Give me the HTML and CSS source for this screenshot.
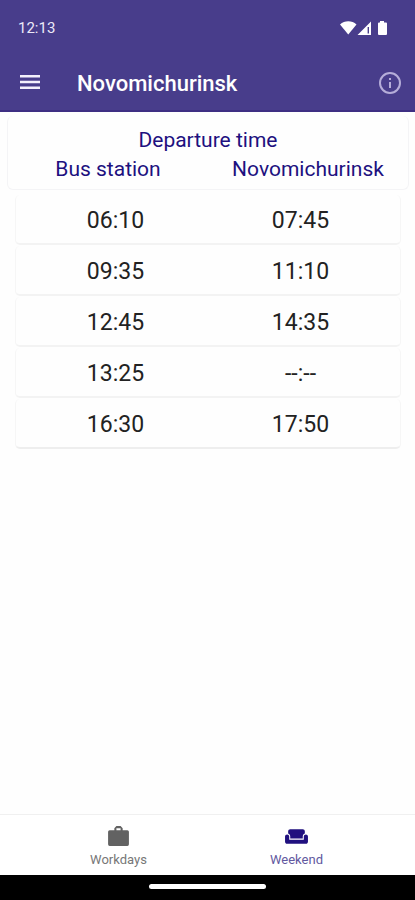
FILE: index.html
```html
<!DOCTYPE html>
<html lang="en">
<head>
<meta charset="utf-8">
<meta name="viewport" content="width=device-width, initial-scale=1">
<title>Novomichurinsk</title>
<link rel="stylesheet" href="styles.css">
</head>
<body>
<header class="top">
  <div class="status">
    <span>12:13</span>
    <svg class="status-icons" viewBox="0 0 48 16" aria-hidden="true">
      <path d="M0 4.400C4.500.2 12 .2 16.500 4.400L8.250 14.500z"/>
      <path fill-rule="evenodd" d="M31 1.500V15H17.500zM27.600 7v6.500h1.400V7z"/>
      <path d="M40 1h4v1.500h2q1 0 1 1V14q0 1-1 1h-7q-1 0-1-1V3.500q0-1 1-1h1z"/>
    </svg>
  </div>
  <div class="toolbar">
    <button class="icon-button" aria-label="Menu">
      <svg viewBox="0 0 24 24"><path d="M2 4h20v2.500H2zM2 9.750h20v2.500H2zM2 15.500h20V18H2z"/></svg>
    </button>
    <h1>Novomichurinsk</h1>
    <button class="icon-button info" aria-label="Information">
      <svg viewBox="0 0 24 24"><path d="M11 7h2v2h-2zm0 4h2v6h-2zm1-10a11 11 0 1 0 0 22 11 11 0 0 0 0-22zm0 20a9 9 0 1 1 0-18 9 9 0 0 1 0 18z"/></svg>
    </button>
  </div>
</header>
<main>
  <table>
    <thead>
      <tr><th class="caption" colspan="2">Departure time</th></tr>
      <tr><th>Bus station</th><th>Novomichurinsk</th></tr>
    </thead>
    <tbody>
      <tr><td>06:10</td><td>07:45</td></tr>
      <tr><td>09:35</td><td>11:10</td></tr>
      <tr><td>12:45</td><td>14:35</td></tr>
      <tr><td>13:25</td><td>--:--</td></tr>
      <tr><td>16:30</td><td>17:50</td></tr>
    </tbody>
  </table>
</main>
<nav class="tabs">
  <a href="#workdays">
    <svg viewBox="0 0 24 24"><path d="M20.500 6H16V4l-2-2h-4L8 4v2H3.500Q2 6 2 7.500v12Q2 21 3.500 21h17q1.500 0 1.500-1.500v-12Q22 6 20.500 6zM14 6h-4V4h4z"/></svg>
    <span>Workdays</span>
  </a>
  <a href="#weekend" class="active" aria-current="page">
    <svg viewBox="0 0 24 24"><path d="M21 10c-1.100 0-2 .9-2 2v3H5v-3c0-1.100-.9-2-2-2s-2 .9-2 2v5c0 1.100.9 2 2 2h18c1.100 0 2-.9 2-2v-5c0-1.100-.9-2-2-2zM18 5H6c-1.100 0-2 .9-2 2v2.150c1.160.41 2 1.510 2 2.820V14h12v-2.030c0-1.300.84-2.400 2-2.820V7c0-1.100-.9-2-2-2z"/></svg>
    <span>Weekend</span>
  </a>
</nav>
<footer class="gesture"><div class="handle"></div></footer>
</body>
</html>
```
FILE: styles.css
```css
* { box-sizing: border-box; }
body {
  margin: 0;
  min-height: 100vh;
  display: flex;
  flex-direction: column;
  background: #fefefe;
  font-family: Roboto, sans-serif;
}
.top {
  background: #483d8b;
  color: #fff;
  border-bottom: 2px solid #3e2f83;
}
.status {
  display: flex;
  align-items: center;
  justify-content: space-between;
  height: 56px;
  padding: 0 27px 0 18px;
  font-size: 15px;
  color: #ece9f8;
}
.status-icons { width: 48px; height: 16px; fill: #fff; }
.toolbar {
  display: flex;
  align-items: center;
  height: 54px;
  padding: 0 13px 0 18px;
}
.icon-button {
  display: flex;
  padding: 0;
  border: 0;
  background: none;
}
.icon-button svg { width: 24px; height: 24px; fill: #f3f0fc; }
.icon-button.info svg { fill: #b5add9; }
h1 {
  flex: 1;
  margin: 0 0 0 35px;
  font-size: 22px;
  font-weight: 500;
}
main { flex: 1; padding: 4px 6px 4px 7px; }
table, thead, tbody { display: block; }
table { border-spacing: 0; }
thead {
  padding: 10px 0 5px;
  border: 1px solid #f4f4f6;
  border-top: 0;
  border-radius: 6px;
  color: #20107f;
}
tr { display: grid; grid-template-columns: 1fr 1fr; }
th, td { padding: 0; text-align: center; }
th {
  font-size: 21px;
  font-weight: 400;
  line-height: 29px;
}
.caption { grid-column: 1 / -1; }
tbody {
  display: grid;
  gap: 1px;
  padding: 5px 8px;
}
tbody tr {
  padding: 4px 7px 0;
  border: 1px solid #f6f6f6;
  border-top: 0;
  border-bottom: 2px solid #f3f3f3;
  border-radius: 5px;
}
td {
  font-size: 23px;
  line-height: 44px;
  color: #222;
}
tbody tr:last-child { border-bottom-color: #eee; }
.tabs {
  display: grid;
  grid-template-columns: 1fr 178px 178px 1fr;
  height: 61px;
  border-top: 1px solid #f0f0f0;
  background: #fff;
}
.tabs a {
  display: flex;
  flex-direction: column;
  align-items: center;
  gap: 2px;
  padding-top: 9px;
  color: #777;
  font-size: 13px;
  line-height: 18px;
  text-decoration: none;
}
.tabs a:first-child { grid-column: 2; }
.tabs svg { width: 25px; height: 25px; fill: #626262; }
.tabs .active { color: #62599f; }
.tabs .active svg { fill: #20107f; }
.gesture {
  display: flex;
  justify-content: center;
  height: 25px;
  padding-top: 9px;
  background: #000;
}
.handle {
  width: 28%;
  height: 5px;
  border-radius: 3px;
  background: #fff;
}
```
